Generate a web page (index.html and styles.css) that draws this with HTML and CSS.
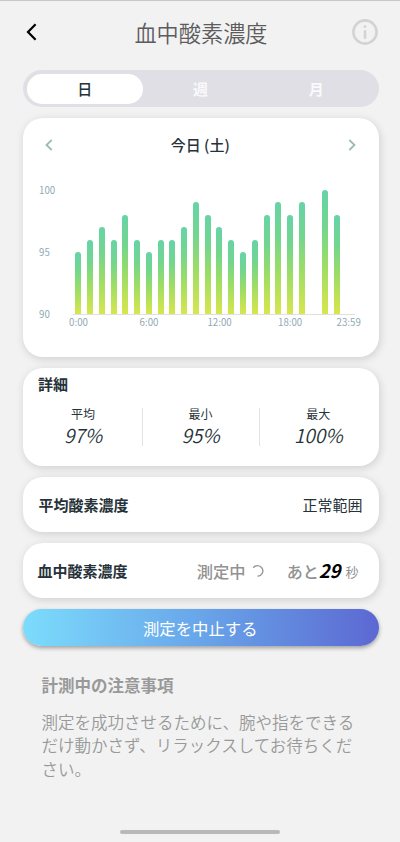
FILE: index.html
```html
<!DOCTYPE html>
<html lang="ja">
<head>
<meta charset="utf-8">
<meta name="viewport" content="width=device-width, initial-scale=1">
<title>血中酸素濃度</title>
<link rel="stylesheet" href="styles.css">
</head>
<body>
<header class="header">
  <svg class="back" viewBox="0 0 12 18"><path d="M9.6 1.3 2 9l7.6 7.7"/></svg>
  <h1 class="title">血中酸素濃度</h1>
  <svg class="info" viewBox="0 0 26 26"><circle cx="13" cy="13" r="11.6"/><path d="M13 11.3v8.4"/><path d="M13 6.3v2.5"/></svg>
</header>
<main class="main">
  <nav class="tabs">
    <span class="tab active">日</span><span class="tab">週</span><span class="tab">月</span>
  </nav>

  <section class="card chart-card">
    <div class="day">
      <svg class="arrow" viewBox="0 0 8 12"><path d="M6.7 1 1.5 6l5.2 5"/></svg>
      <span class="date">今日 (土)</span>
      <svg class="arrow" viewBox="0 0 8 12"><path d="M1.3 1l5.2 5-5.2 5"/></svg>
    </div>
    <div class="chart">
      <div class="scale"><span>100</span><span>95</span><span>90</span></div>
      <div class="plot">
        <div class="bars">
          <i style="height:50%"></i><i style="height:60%"></i><i style="height:70%"></i><i style="height:60%"></i><i style="height:80%"></i><i style="height:60%"></i><i style="height:50%"></i><i style="height:60%"></i><i style="height:60%"></i><i style="height:70%"></i><i style="height:90%"></i><i style="height:80%"></i><i style="height:70%"></i><i style="height:60%"></i><i style="height:50%"></i><i style="height:60%"></i><i style="height:80%"></i><i style="height:90%"></i><i style="height:80%"></i><i style="height:90%"></i><i style="height:0%"></i><i style="height:100%"></i><i style="height:80%"></i><i style="height:0%"></i>
        </div>
        <div class="hours"><span>0:00</span><span>6:00</span><span>12:00</span><span>18:00</span><span>23:59</span></div>
      </div>
    </div>
  </section>

  <section class="card detail">
    <h2 class="label">詳細</h2>
    <div class="stats">
      <div class="stat"><span class="stat-name">平均</span><span class="stat-value">97%</span></div>
      <div class="stat"><span class="stat-name">最小</span><span class="stat-value">95%</span></div>
      <div class="stat"><span class="stat-name">最大</span><span class="stat-value">100%</span></div>
    </div>
  </section>

  <section class="card row">
    <h2 class="label">平均酸素濃度</h2>
    <span class="range">正常範囲</span>
  </section>

  <section class="card row measure">
    <h2 class="label">血中酸素濃度</h2>
    <span class="status">測定中</span>
    <svg class="spinner" viewBox="0 0 14 14"><path d="M2.2 3.8A5.3 5.3 0 1 1 6.6 12.2"/></svg>
    <span class="remain">あと</span><span class="seconds">29</span><span class="unit">秒</span>
  </section>

  <button class="stop">測定を中止する</button>

  <section class="notes">
    <h2 class="notes-title">計測中の注意事項</h2>
    <p class="notes-text">測定を成功させるために、腕や指をできるだけ動かさず、リラックスしてお待ちください。</p>
  </section>
</main>
<div class="home-bar"></div>
</body>
</html>
```
FILE: styles.css
```css
* { box-sizing: border-box; }
body {
  margin: 0;
  height: 842px;
  display: flex;
  flex-direction: column;
  background: #f2f2f2;
  border-top: 1px solid #c8c8c8;
  color: #263238;
  font-family: "Noto Sans CJK JP", sans-serif;
  overflow: hidden;
}
h1, h2, p { margin: 0; }
svg { fill: none; flex: none; }
.header {
  height: 69px;
  padding: 0 22px 7px 26px;
  display: flex;
  align-items: center;
  justify-content: space-between;
}
.back { width: 12px; height: 18px; stroke: #000; stroke-width: 2.2; margin-right: 12px; }
.title { font-size: 22.2px; font-weight: 350; line-height: 32px; color: #5c5c5c; }
.info { width: 26px; height: 26px; stroke: #d3d3d3; stroke-width: 2.6; }
.main { padding: 0 21.5px 0 23px; }
.tabs {
  height: 37px;
  padding: 4px 4.5px 3px 4px;
  display: grid;
  grid-template-columns: repeat(3, 1fr);
  border-radius: 19px;
  background: #e0dfe5;
}
.tab {
  display: flex;
  align-items: center;
  justify-content: center;
  border-radius: 15px;
  color: #fafafc;
  font-size: 15px;
  font-weight: 700;
  line-height: 20px;
}
.tab.active { background: #fff; color: #263238; font-weight: 500; }
.card {
  margin-top: 11px;
  border-radius: 20px;
  background: #fff;
  box-shadow: 1px 2px 8px rgba(0, 0, 0, .15);
}
.chart-card { height: 238.5px; padding: 16px 17px 0 16px; }
.day {
  height: 22px;
  padding: 0 6px;
  display: flex;
  align-items: center;
  justify-content: space-between;
  font-size: 15px;
  font-weight: 500;
}
.date { margin-top: -2px; }
.arrow { width: 8px; height: 12px; stroke: #9dbab9; stroke-width: 1.8; }
.chart { display: flex; padding-top: 34px; color: #90a9b3; font-size: 9.7px; line-height: 12px; }
.scale {
  width: 33.5px;
  height: 136px;
  margin-top: -6px;
  display: flex;
  flex-direction: column;
  justify-content: space-between;
}
.plot { width: 282.2px; }
.bars {
  height: 125px;
  display: grid;
  grid-template-columns: repeat(24, 1fr);
  align-items: end;
  justify-items: center;
  border-bottom: 1px solid #dfe1e1;
}
.bars i {
  width: 6px;
  border-radius: 3px 3px 0 0;
  background: linear-gradient(#67d3a7 0%, #72d68e 30%, #9bdd66 60%, #d8e64c 100%);
}
.hours { display: flex; margin: 1px -10px 0 -29.3px; }
.hours span { width: 70.56px; flex: none; text-align: center; }
.hours span:last-child { margin-left: -12px; }
.detail { height: 98px; padding: 6px 1.5px 0; }
.label { font-size: 15px; font-weight: 700; line-height: 20px; }
.detail .label { padding-left: 13.5px; }
.stats { display: grid; grid-template-columns: 117px 117px 1fr; margin-top: 14px; }
.stat {
  height: 38px;
  display: flex;
  flex-direction: column;
  align-items: center;
}
.stat + .stat { border-left: 1.5px solid #e1e4e6; }
.stat-name { margin-top: -3px; font-size: 12px; line-height: 18px; }
.stat-value { font-size: 19px; font-style: italic; font-weight: 350; line-height: 24px; }
.row {
  height: 55px;
  padding: 1px 16px 0 15.5px;
  display: flex;
  align-items: center;
  line-height: 20px;
}
.range { margin-left: auto; font-size: 15px; }
.measure { padding-left: 14.5px; padding-right: 20px; color: #929292; }
.measure .label { color: #263238; }
.status { margin-left: auto; font-size: 16.3px; font-weight: 500; }
.spinner { width: 14px; height: 14px; margin: 0 22px 0 5px; stroke: #999; stroke-width: 1.4; }
.remain { margin-top: 1px; font-size: 16px; font-weight: 500; }
.seconds { margin-top: -1px; color: #000; font-size: 18.5px; font-style: italic; font-weight: 700; }
.unit { margin: 3px 0 0 5px; font-size: 13px; }
.stop {
  display: block;
  width: 100%;
  height: 37px;
  margin-top: 11px;
  padding: 1px 1px 0 0;
  border: 0;
  border-radius: 19px;
  background: linear-gradient(90deg, #7cdcfc, #68a5e9 50%, #5c68d2);
  box-shadow: 0 2px 4px rgba(0, 0, 0, .35);
  color: #fff;
  font: 400 16.4px/24px "Noto Sans CJK JP", sans-serif;
}
.notes { padding: 27px 0 0 18.5px; color: #999; font-size: 16.5px; }
.notes-title { font-size: 16.5px; font-weight: 700; line-height: 24px; }
.notes-text { width: 316px; margin-top: 14px; font-weight: 350; line-height: 23.5px; }
.home-bar { width: 160px; height: 4px; margin: auto auto 8px; border-radius: 2px; background: #b9b9b9; }
```
